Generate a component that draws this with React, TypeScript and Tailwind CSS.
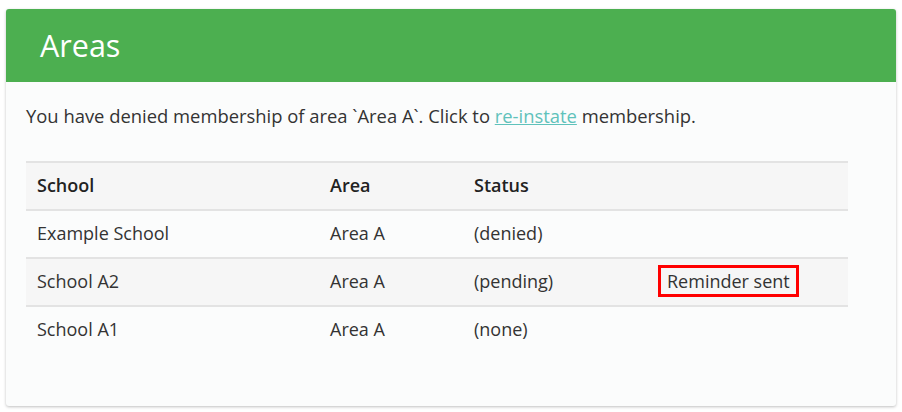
const rows = [
  { school: 'Example School', area: 'Area A', status: '(denied)', note: '' },
  { school: 'School A2', area: 'Area A', status: '(pending)', note: 'Reminder sent' },
  { school: 'School A1', area: 'Area A', status: '(none)', note: '' },
];

export default function App() {
  return (
    <div className="h-[412px] w-[902px] bg-white pl-[6px] pr-[6px] pt-[9px] font-['Open_Sans',sans-serif]">
      <div className="h-[397px] w-[890px] overflow-hidden rounded-[3px] bg-[#fbfcfc] shadow-[0_1px_3px_rgba(0,0,0,0.25)]">
        <div className="flex h-[73px] items-center bg-[#4caf50] px-[34px]">
          <h1 className="text-[30.5px] leading-none text-white">Areas</h1>
        </div>
        <div className="px-[20px] pt-[20px]">
          <p className="text-[18.4px] leading-[27px] text-[#333]">
            You have denied membership of area `Area A`. Click to{' '}
            <a href="#" className="text-[#5fc2bb] underline">re-instate</a> membership.
          </p>
          <table className="mt-[32px] w-[822px] table-fixed border-collapse text-[18px] text-[#333]">
            <colgroup>
              <col className="w-[294px]" />
              <col className="w-[144px]" />
              <col className="w-[184px]" />
              <col className="w-[200px]" />
            </colgroup>
            <thead>
              <tr className="h-[48px] border-t-2 border-[#e3e3e3] bg-[#f6f6f6]">
                <th className="pb-[2px] pl-[11px] pr-[10px] text-left font-semibold text-[#222]">School</th>
                <th className="pb-[2px] px-[10px] text-left font-semibold text-[#222]">Area</th>
                <th className="pb-[2px] px-[10px] text-left font-semibold text-[#222]">Status</th>
                <th></th>
              </tr>
            </thead>
            <tbody>
              {rows.map((r, i) => (
                <tr
                  key={r.school}
                  className={`h-[48px] border-t-2 border-[#e3e3e3] ${i === 1 ? 'bg-[#f6f6f6]' : ''}`}
                >
                  <td className="pb-[2px] pl-[11px] pr-[10px]">{r.school}</td>
                  <td className="pb-[2px] px-[10px]">{r.area}</td>
                  <td className="pb-[2px] px-[10px]">{r.status}</td>
                  <td className="pb-[2px] px-[10px]">
                    {r.note && (
                      <span className="inline-block h-[32px] border-[3px] border-[#ff0000] px-[6px] leading-[26px]">
                        {r.note}
                      </span>
                    )}
                  </td>
                </tr>
              ))}
            </tbody>
          </table>
        </div>
      </div>
    </div>
  );
}
